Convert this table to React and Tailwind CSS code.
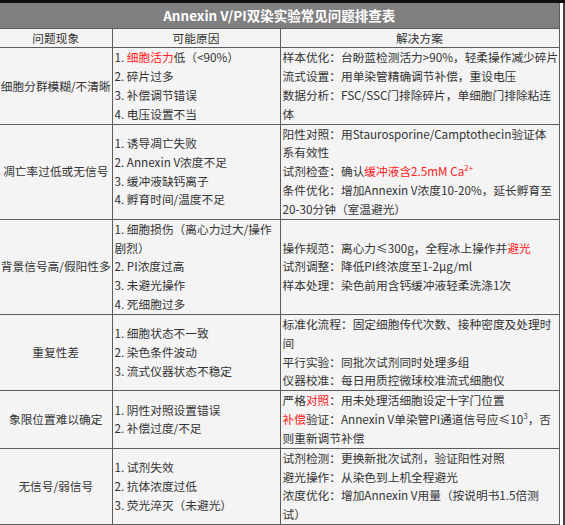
import React from "react";

const R = ({ children }) => <span className="text-[#ff2020]">{children}</span>;
const Sup = ({ children }) => (
  <span className="relative -top-[5px] text-[8px] leading-none">{children}</span>
);

const rows = [
  {
    a: "细胞分群模糊/不清晰",
    b: [
      <>1. <R>细胞活力</R>低（&lt;90%）</>,
      "2. 碎片过多",
      "3. 补偿调节错误",
      "4. 电压设置不当",
    ],
    c: [
      "样本优化：台盼蓝检测活力>90%，轻柔操作减少碎片",
      "流式设置：用单染管精确调节补偿，重设电压",
      "数据分析：FSC/SSC门排除碎片，单细胞门排除粘连",
      "体",
    ],
  },
  {
    a: "凋亡率过低或无信号",
    b: ["1. 诱导凋亡失败", "2. Annexin V浓度不足", "3. 缓冲液缺钙离子", "4. 孵育时间/温度不足"],
    c: [
      "阳性对照：用Staurosporine/Camptothecin验证体",
      "系有效性",
      <>试剂检查：确认<R>缓冲液含2.5mM Ca<Sup>2+</Sup></R></>,
      "条件优化：增加Annexin V浓度10-20%，延长孵育至",
      "20-30分钟（室温避光）",
    ],
  },
  {
    a: "背景信号高/假阳性多",
    b: ["1. 细胞损伤（离心力过大/操作", "剧烈）", "2. PI浓度过高", "3. 未避光操作", "4. 死细胞过多"],
    c: [
      <>操作规范：离心力≤300g，全程冰上操作并<R>避光</R></>,
      "试剂调整：降低PI终浓度至1-2μg/ml",
      "样本处理：染色前用含钙缓冲液轻柔洗涤1次",
    ],
  },
  {
    a: "重复性差",
    b: ["1. 细胞状态不一致", "2. 染色条件波动", "3. 流式仪器状态不稳定"],
    c: [
      "标准化流程：固定细胞传代次数、接种密度及处理时",
      "间",
      "平行实验：同批次试剂同时处理多组",
      "仪器校准：每日用质控微球校准流式细胞仪",
    ],
  },
  {
    a: "象限位置难以确定",
    b: ["1. 阴性对照设置错误", "2. 补偿过度/不足"],
    c: [
      <>严格<R>对照</R>：用未处理活细胞设定十字门位置</>,
      <><R>补偿</R>验证：Annexin V单染管PI通道信号应≤10<Sup>3</Sup>，否</>,
      "则重新调节补偿",
    ],
  },
  {
    a: "无信号/弱信号",
    b: ["1. 试剂失效", "2. 抗体浓度过低", "3. 荧光淬灭（未避光）"],
    c: [
      "试剂检测：更换新批次试剂，验证阳性对照",
      "避光操作：从染色到上机全程避光",
      "浓度优化：增加Annexin V用量（按说明书1.5倍测",
      "试）",
    ],
  },
];

const Lines = ({ items }) => (
  <div className="px-[2px]">
    {items.map((t, i) => (
      <div key={i} className="whitespace-nowrap">
        {t}
      </div>
    ))}
  </div>
);

export default function App() {
  return (
    <div className="w-[565px] h-[525px] bg-white overflow-hidden font-['Noto_Sans_CJK_SC','Noto_Sans',sans-serif] text-[#333333] text-[11.7px] leading-[18.8px]">
      <div className="h-[3px] bg-[#111111]" />
      <div className="flex">
        <table className="table-fixed border-collapse w-[559px] bg-[#f4f4f4]">
          <colgroup>
            <col className="w-[112px]" />
            <col className="w-[168px]" />
            <col className="w-[279px]" />
          </colgroup>
          <tbody>
            <tr className="h-[25px]">
              <td
                colSpan={3}
                className="bg-[#808080] text-white font-bold text-[13.5px] text-center p-0 border-r border-[#5c5c5c]"
              >
                Annexin V/PI双染实验常见问题排查表
              </td>
            </tr>
            <tr className="h-[19px]">
              <td className="border border-l-0 border-[#5c5c5c] text-center p-0">问题现象</td>
              <td className="border border-[#5c5c5c] text-center p-0">可能原因</td>
              <td className="border border-[#5c5c5c] text-center p-0">解决方案</td>
            </tr>
            {rows.map((r, i) => (
              <tr key={i}>
                <td className="border border-l-0 border-[#5c5c5c] text-center align-middle p-0 whitespace-nowrap">
                  {r.a}
                </td>
                <td className="border border-[#5c5c5c] align-middle p-0">
                  <Lines items={r.b} />
                </td>
                <td className="border border-[#5c5c5c] align-middle p-0">
                  <Lines items={r.c} />
                </td>
              </tr>
            ))}
          </tbody>
        </table>
        <div className="w-[4px] bg-white" />
        <div className="w-[2px] self-stretch h-[522px] bg-[#444444]" />
      </div>
    </div>
  );
}
